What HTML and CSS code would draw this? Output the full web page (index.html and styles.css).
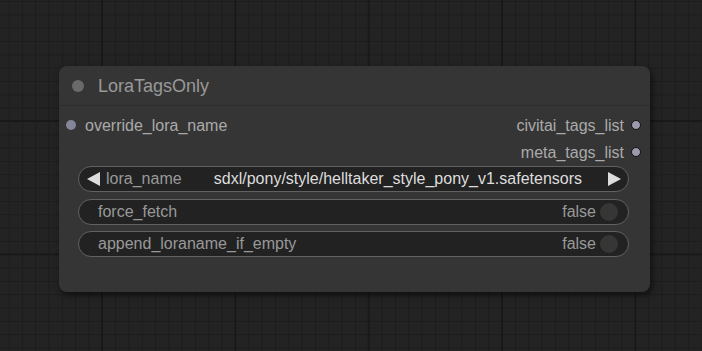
FILE: index.html
```
<!DOCTYPE html>
<html>

<head>
    <meta charset="utf-8">
    <title>LoraTagsOnly</title>
    <link rel="stylesheet" href="styles.css">
</head>

<body>
    <div class="canvas">
        <div class="node">
            <div class="node-title">
                <span class="title-dot"></span>
                <span class="title-text">LoraTagsOnly</span>
            </div>
            <div class="slots">
                <div class="slot-row">
                    <div class="slot-in"><span class="dot in"></span>override_lora_name</div>
                    <div class="slot-out">civitai_tags_list<span class="dot out"></span></div>
                </div>
                <div class="slot-row">
                    <div class="slot-in"></div>
                    <div class="slot-out">meta_tags_list<span class="dot out"></span></div>
                </div>
            </div>
            <div class="widgets">
                <div class="widget combo">
                    <svg class="arrow" width="13" height="14" viewBox="0 0 13 14"><polygon points="13,0 13,14 0,7" /></svg>
                    <span class="label">lora_name</span>
                    <span class="value">sdxl/pony/style/helltaker_style_pony_v1.safetensors</span>
                    <svg class="arrow" width="13" height="14" viewBox="0 0 13 14"><polygon points="0,0 0,14 13,7" /></svg>
                </div>
                <div class="widget toggle">
                    <span class="label">force_fetch</span>
                    <span class="state">false</span>
                    <span class="knob"></span>
                </div>
                <div class="widget toggle">
                    <span class="label">append_loraname_if_empty</span>
                    <span class="state">false</span>
                    <span class="knob"></span>
                </div>
            </div>
        </div>
    </div>
</body>

</html>
```

FILE: styles.css
```
* {
    box-sizing: border-box;
    font-family: 'Liberation Sans', Arial, sans-serif;
    --bg: #232323;
    --line: #1c1c1c;
    --line-major: #191919;
    --node: #353535;
    --widget: #222222;
    --widget-border: #616161;
    --text: #aaaaaa;
    --text-dim: #999999;
    --text-bright: #dddddd;
}

body {
    margin: 0;
    overflow: hidden;
}

.canvas {
    position: relative;
    width: 702px;
    height: 351px;
    background-color: var(--bg);
    background-image:
        linear-gradient(to right, var(--line-major) 2px, transparent 2px),
        linear-gradient(to bottom, var(--line-major) 2px, transparent 2px),
        linear-gradient(to right, var(--line) 1px, transparent 1px),
        linear-gradient(to bottom, var(--line) 1px, transparent 1px);
    background-size: 133.33px 133.33px, 133.33px 133.33px, 13.333px 13.333px, 13.333px 13.333px;
    background-position: 101px 120px, 101px 120px, 8.5px 1px, 8.5px 1px;
}

.node {
    position: absolute;
    left: 59px;
    top: 66px;
    width: 591px;
    height: 226px;
    background: var(--node);
    border-radius: 8px;
    box-shadow: 2px 3px 6px rgba(0, 0, 0, 0.55);
    display: flex;
    flex-direction: column;
}

.node-title {
    height: 40px;
    display: flex;
    align-items: center;
    border-bottom: 1px solid #2d2d2d;
    padding-left: 13px;
    padding-top: 1px;
}

.title-dot {
    width: 12px;
    height: 12px;
    border-radius: 50%;
    background: #6a6a6a;
}

.title-text {
    margin-left: 14px;
    font-size: 18px;
    color: var(--text-dim);
}

.slots {
    margin-top: 6px;
    display: flex;
    flex-direction: column;
}

.slot-row {
    height: 27px;
    display: flex;
    justify-content: space-between;
    align-items: center;
    font-size: 16px;
    color: var(--text);
}

.slot-in {
    display: flex;
    align-items: center;
    padding-left: 7px;
}

.slot-out {
    display: flex;
    align-items: center;
    padding-right: 9px;
}

.dot {
    width: 10px;
    height: 10px;
    border-radius: 50%;
}

.dot.in {
    background: #85859a;
    margin-right: 9px;
    margin-top: -2px;
}

.dot.out {
    background: #9a9aac;
    border: 1px solid #111;
    margin-left: 7px;
    margin-top: -2px;
}

.widgets {
    margin-top: 0;
    padding: 0 21px 0 19px;
    display: flex;
    flex-direction: column;
    gap: 6.5px;
}

.widget {
    height: 26px;
    border: 1px solid var(--widget-border);
    border-radius: 13px;
    background: var(--widget);
    display: flex;
    align-items: center;
    font-size: 16px;
}

.combo {
    padding: 0 7px 0 8px;
}

.combo .arrow {
    fill: var(--text-bright);
}

.combo .label {
    margin-left: 6px;
    color: var(--text-dim);
}

.combo .value {
    margin-left: auto;
    margin-right: 26px;
    color: var(--text-bright);
}

.toggle {
    padding: 0 10px 0 19px;
}

.toggle .label {
    color: var(--text-dim);
}

.toggle .state {
    margin-left: auto;
    color: var(--text-dim);
}

.knob {
    width: 18px;
    height: 18px;
    border-radius: 50%;
    background: #363636;
    margin-left: 4px;
}
```
